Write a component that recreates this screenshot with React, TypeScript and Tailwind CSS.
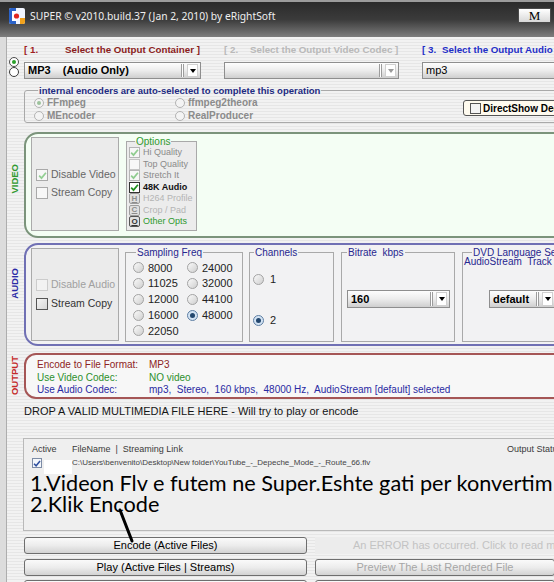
import React from "react";

function CB({ cls, check }: { cls: string; check?: string }) {
  return (
    <div className={`flex shrink-0 items-center justify-center border ${cls}`}>
      {check ? (
        <svg width="9" height="9" viewBox="0 0 10 10">
          <path d="M1.3 5.2 L3.9 7.9 L8.8 2" fill="none" stroke={check} strokeWidth="1.9" />
        </svg>
      ) : null}
    </div>
  );
}

function RD({ cls, dot }: { cls: string; dot?: string }) {
  return (
    <div className={`flex shrink-0 items-center justify-center rounded-full border ${cls}`}>
      {dot ? <div className={`rounded-full ${dot}`} /> : null}
    </div>
  );
}

function Combo({ w, children, arrow, bold }: { w: string; children?: React.ReactNode; arrow?: string; bold?: boolean }) {
  return (
    <div className={`flex h-[17px] shrink-0 items-center border border-[#8e8e8e] bg-gradient-to-b from-[#fdfdfd] via-[#ececec] to-[#cfcfcf] ${w}`}>
      <div className={`flex-1 overflow-hidden whitespace-pre pl-[3px] text-[11px] leading-[15px] text-black ${bold ? "font-bold" : ""}`}>{children}</div>
      {arrow ? (
        <>
          <div className="h-[13px] w-[3px] border-x border-[#9c9c9c] bg-white" />
          <div className="ml-[3px] mr-[2px] flex h-[13px] w-[11px] items-center justify-center border border-[#d0d0d0] bg-white">
            <div className={`h-0 w-0 border-x-[3px] border-t-[4px] border-x-transparent ${arrow}`} />
          </div>
        </>
      ) : null}
    </div>
  );
}

function Btn({ w, children, txt }: { w: string; children?: React.ReactNode; txt: string }) {
  return (
    <div className={`flex h-[17px] shrink-0 items-center justify-center rounded-[3px] border border-[#6e6e6e] bg-gradient-to-b from-[#fafafa] via-[#ececec] to-[#d3d3d3] text-[11px] leading-none ${w} ${txt}`}>
      {children}
    </div>
  );
}

function AppIcon() {
  return (
    <svg width="16" height="16" viewBox="0 0 16 16">
      <rect x="0" y="0" width="16" height="16" rx="2" fill="#f2f6ff" />
      <path d="M2 0 H7 V16 H2 Q0 16 0 14 V2 Q0 0 2 0Z" fill="#2b63c9" />
      <path d="M3 3 H8 V13 H3Z" fill="#ffffff" />
      <circle cx="7.5" cy="8" r="2.6" fill="#e0261f" />
      <path d="M11 10 H16 V14 Q16 16 14 16 H11Z" fill="#f2a21c" />
    </svg>
  );
}

function OptBtn({ l, cls }: { l: string; cls: string }) {
  return (
    <div className={`flex h-[11px] w-[11px] shrink-0 items-center justify-center rounded-[2px] border bg-[#e0e0e0] text-[8px] font-bold leading-none underline ${cls}`}>
      {l}
    </div>
  );
}

export default function App() {
  return (
    <div className="relative h-[582px] w-[554px] overflow-hidden bg-[#ececec] font-['Liberation_Sans',Arial,sans-serif] text-[#222]">
      {/* title bar */}
      <div className="flex h-[37px] items-start border-t-2 border-[#9c9c9c] bg-gradient-to-b from-[#2b2b2b] via-[#3b3b3b] to-[#7e7e7e]">
        <div className="ml-[9px] mt-[6px]">
          <AppIcon />
        </div>
        <div className="ml-[5px] mt-[6px] whitespace-nowrap font-['Noto_Sans',sans-serif] text-[10.3px] leading-[16px] text-[#efefef]">
          SUPER © v2010.build.37 (Jan 2, 2010) by eRightSoft
        </div>
        <div className="ml-auto mr-[3px] mt-[6px] flex h-[15px] w-[33px] items-center justify-center border border-[#4a4a4a] bg-gradient-to-b from-[#ffffff] to-[#d8d8d8] font-['Liberation_Serif',serif] text-[13px] leading-none text-black">
          M
        </div>
      </div>

      <div className="flex h-[545px]">
        <div className="w-[7px] shrink-0 border-r border-[#adadad] bg-[#dcdcdc]" />
        <div className="w-[547px] shrink-0 bg-[repeating-linear-gradient(180deg,#f2f2f2_0px,#f2f2f2_2px,#e6e6e6_2px,#e6e6e6_3px)]">
          {/* step headers + combos */}
          <div className="flex">
            <div className="flex w-[17px] shrink-0 flex-col pl-[2px] pt-[20px]">
              <RD cls="h-[10px] w-[10px] border-[#4d4d4d] bg-white" dot="h-[4px] w-[4px] bg-[#2aa02a]" />
              <RD cls="h-[10px] w-[10px] border-[#3a3a3a] bg-white" />
            </div>
            <div className="flex-1">
              <div className="mt-[7px] flex h-[12px] items-center whitespace-nowrap text-[9.75px] font-bold leading-[12px]">
                <span className="w-[41px] shrink-0 text-[#a01f1f]">[ 1.</span>
                <span className="w-[159px] shrink-0 text-[#8b1c1c]">Select the Output Container ]</span>
                <span className="w-[26px] shrink-0 text-[#b9b9b9]">[ 2.</span>
                <span className="w-[172px] shrink-0 text-[#b9b9b9]">Select the Output Video Codec ]</span>
                <span className="w-[20px] shrink-0 text-[#1f2fc8]">[ 3.</span>
                <span className="shrink-0 text-[#1f2fc8]">Select the Output Audio Codec ]</span>
              </div>
              <div className="mt-[6px] flex">
                <Combo w="w-[177px]" arrow="border-t-black" bold>
                  {"MP3    (Audio Only)"}
                </Combo>
                <div className="ml-[23px]">
                  <Combo w="w-[175px]" arrow="border-t-[#9a9a9a]" />
                </div>
                <div className="ml-[23px]">
                  <Combo w="w-[150px]">mp3</Combo>
                </div>
              </div>
            </div>
          </div>

          {/* encoders */}
          <fieldset className="ml-[17px] mt-[6px] w-[545px] rounded-[3px] border border-[#a9a9a9] pl-[9px]">
            <legend className="ml-[4px] px-[1px] text-[9.5px] font-bold leading-[11px] text-[#1d2b82]">
              internal encoders are auto-selected to complete this operation
            </legend>
            <div className="flex h-[26px]">
              <div className="grid grid-cols-[141px_140px] grid-rows-[13px_13px] text-[10px] font-bold text-[#8b8b8b]">
                <div className="flex items-center gap-[3px]">
                  <RD cls="h-[10px] w-[10px] border-[#b3b3b3] bg-[#f4f4f4]" dot="h-[4px] w-[4px] bg-[#9cc29c]" />
                  <span>FFmpeg</span>
                </div>
                <div className="flex items-center gap-[3px]">
                  <RD cls="h-[10px] w-[10px] border-[#b3b3b3] bg-[#f4f4f4]" />
                  <span>ffmpeg2theora</span>
                </div>
                <div className="flex items-center gap-[3px]">
                  <RD cls="h-[10px] w-[10px] border-[#b3b3b3] bg-[#f4f4f4]" />
                  <span>MEncoder</span>
                </div>
                <div className="flex items-center gap-[3px]">
                  <RD cls="h-[10px] w-[10px] border-[#b3b3b3] bg-[#f4f4f4]" />
                  <span>RealProducer</span>
                </div>
              </div>
              <div className="ml-[148px] mt-[4px] flex h-[16px] w-[110px] shrink-0 items-center rounded-[3px] border border-[#555] bg-[#fffbef] pl-[6px]">
                <CB cls="h-[11px] w-[11px] border-[#555] bg-[#f4f4f4]" />
                <span className="ml-[2px] whitespace-nowrap text-[10px] font-bold text-black">DirectShow Decoding</span>
              </div>
            </div>
          </fieldset>

          {/* VIDEO */}
          <div className="mt-[9px] flex h-[106px]">
            <div className="flex w-[17px] shrink-0 items-start justify-center pr-[2px] pt-[32px]">
              <span className="rotate-180 text-[9.5px] font-bold leading-none text-[#2f9a2f] [writing-mode:vertical-rl]">VIDEO</span>
            </div>
            <div className="flex w-[545px] shrink-0 items-start gap-[7px] rounded-l-[14px] border-2 border-[#7b947b] bg-[#f4fef4] pl-[5px] pt-[3px]">
              <div className="flex h-[94px] w-[88px] shrink-0 flex-col justify-center border border-[#aaaaaa] bg-[#ebebeb] pl-[4px]">
                <div className="flex h-[18px] items-center gap-[3px]">
                  <CB cls="h-[12px] w-[12px] border-[#a9a9a9] bg-[#f7f7f7]" check="#93cf93" />
                  <span className="text-[10.5px] text-[#666]">Disable Video</span>
                </div>
                <div className="flex h-[18px] items-center gap-[3px]">
                  <CB cls="h-[12px] w-[12px] border-[#a9a9a9] bg-[#f7f7f7]" />
                  <span className="text-[10.5px] text-[#666]">Stream Copy</span>
                </div>
              </div>
              <fieldset className="-mt-[1px] h-[95px] w-[71px] shrink-0 border border-[#a9a9a9] bg-[#ececec] pl-[2px]">
                <legend className="ml-[6px] px-[1px] text-[10px] leading-[11px] text-[#2f9a2f]">Options</legend>
                <div className="text-[9px] leading-none">
                  <div className="flex h-[11.5px] items-center gap-[3px]">
                    <CB cls="h-[11px] w-[11px] border-[#b5b5b5] bg-[#f7f7f7]" check="#8fcc8f" />
                    <span className="text-[#8a8a8a]">Hi Quality</span>
                  </div>
                  <div className="flex h-[11.5px] items-center gap-[3px]">
                    <CB cls="h-[11px] w-[11px] border-[#c4c4c4] bg-[#f7f7f7]" />
                    <span className="text-[#8a8a8a]">Top Quality</span>
                  </div>
                  <div className="flex h-[11.5px] items-center gap-[3px]">
                    <CB cls="h-[11px] w-[11px] border-[#b5b5b5] bg-[#f7f7f7]" check="#8fcc8f" />
                    <span className="text-[#8a8a8a]">Stretch It</span>
                  </div>
                  <div className="flex h-[11.5px] items-center gap-[3px]">
                    <CB cls="h-[11px] w-[11px] border-[#333] bg-white" check="#1f8f1f" />
                    <span className="font-bold text-[#111]">48K Audio</span>
                  </div>
                  <div className="flex h-[11.5px] items-center gap-[3px]">
                    <OptBtn l="H" cls="border-[#9d9d9d] text-[#8d8d8d]" />
                    <span className="text-[#b4b4b4]">H264 Profile</span>
                  </div>
                  <div className="flex h-[11.5px] items-center gap-[3px]">
                    <OptBtn l="C" cls="border-[#9d9d9d] text-[#8d8d8d]" />
                    <span className="text-[#b4b4b4]">Crop / Pad</span>
                  </div>
                  <div className="flex h-[11.5px] items-center gap-[3px]">
                    <OptBtn l="O" cls="border-[#555] text-[#333]" />
                    <span className="text-[#2f9a2f]">Other Opts</span>
                  </div>
                </div>
              </fieldset>
            </div>
          </div>

          {/* AUDIO */}
          <div className="mt-[5px] flex h-[103px]">
            <div className="flex w-[17px] shrink-0 items-start justify-center pr-[2px] pt-[25px]">
              <span className="rotate-180 text-[9.5px] font-bold leading-none text-[#2b2ba6] [writing-mode:vertical-rl]">AUDIO</span>
            </div>
            <div className="flex w-[545px] shrink-0 items-start rounded-l-[14px] border-2 border-[#7070b4] bg-[#f2f2f3] pl-[5px]">
              <div className="mt-[3px] flex h-[93px] w-[88px] shrink-0 flex-col justify-center border border-[#aaaaaa] bg-[#ebebeb] pl-[4px]">
                <div className="flex h-[19px] items-center gap-[3px]">
                  <CB cls="h-[12px] w-[12px] border-[#cccccc] bg-[#f2f2f2]" />
                  <span className="text-[10.5px] text-[#a0a0a0]">Disable Audio</span>
                </div>
                <div className="flex h-[19px] items-center gap-[3px]">
                  <CB cls="h-[12px] w-[12px] border-[#555] bg-gradient-to-br from-[#f4f4f4] to-[#d6d6d6]" />
                  <span className="text-[10.5px] text-[#333]">Stream Copy</span>
                </div>
              </div>

              <fieldset className="ml-[6px] mt-[2px] h-[95px] w-[118px] shrink-0 border border-[#a9a9a9] pl-[7px]">
                <legend className="ml-[3px] px-[1px] text-[10px] leading-[11px] text-[#27278f]">Sampling Freq</legend>
                <div className="grid grid-cols-[54px_54px] pt-[2px] text-[11px] text-[#222]">
                  {[
                    ["8000", false],
                    ["24000", false],
                    ["11025", false],
                    ["32000", false],
                    ["12000", false],
                    ["44100", false],
                    ["16000", false],
                    ["48000", true],
                    ["22050", false],
                  ].map(([v, on]) => (
                    <div key={v as string} className="flex h-[15.75px] items-center gap-[4px]">
                      {on ? (
                        <RD cls="h-[11px] w-[11px] border-[#5f7fa3] bg-[#d3e3f3]" dot="h-[5px] w-[5px] bg-[#23476e]" />
                      ) : (
                        <RD cls="h-[11px] w-[11px] border-[#a3a3a3] bg-gradient-to-br from-[#fafafa] to-[#cfcfcf]" />
                      )}
                      <span>{v as string}</span>
                    </div>
                  ))}
                </div>
              </fieldset>

              <fieldset className="ml-[6px] mt-[2px] h-[95px] w-[85px] shrink-0 border border-[#a9a9a9] pl-[3px]">
                <legend className="ml-[1px] px-[1px] text-[10px] leading-[11px] text-[#27278f]">Channels</legend>
                <div className="mt-[15px] flex h-[12px] items-center gap-[6px] text-[11px]">
                  <RD cls="h-[11px] w-[11px] border-[#a3a3a3] bg-gradient-to-br from-[#fafafa] to-[#cfcfcf]" />
                  <span>1</span>
                </div>
                <div className="mt-[29px] flex h-[12px] items-center gap-[6px] text-[11px]">
                  <RD cls="h-[11px] w-[11px] border-[#5f7fa3] bg-[#d3e3f3]" dot="h-[5px] w-[5px] bg-[#23476e]" />
                  <span>2</span>
                </div>
              </fieldset>

              <fieldset className="ml-[7px] mt-[2px] h-[95px] w-[114px] shrink-0 border border-[#a9a9a9] pl-[5px]">
                <legend className="whitespace-pre px-[1px] text-[10px] leading-[11px] text-[#27278f]">{"Bitrate  kbps"}</legend>
                <div className="mt-[32px] h-[18px]">
                  <div className="flex h-[18px] w-[103px] items-center border border-[#8e8e8e] bg-gradient-to-b from-[#fdfdfd] via-[#ececec] to-[#cfcfcf]">
                    <div className="flex-1 pl-[3px] text-[11px] font-bold text-black">160</div>
                    <div className="h-[14px] w-[3px] border-x border-[#9c9c9c] bg-white" />
                    <div className="ml-[3px] mr-[2px] flex h-[14px] w-[11px] items-center justify-center border border-[#d0d0d0] bg-white">
                      <div className="h-0 w-0 border-x-[3px] border-t-[4px] border-x-transparent border-t-black" />
                    </div>
                  </div>
                </div>
              </fieldset>

              <fieldset className="ml-[7px] mt-[2px] h-[95px] w-[130px] shrink-0 border border-[#a9a9a9] pl-[1px]">
                <legend className="ml-[8px] whitespace-nowrap px-[1px] text-[10px] leading-[11px] text-[#27278f]">DVD Language Selection</legend>
                <div className="-mt-[1px] whitespace-pre text-[10px] leading-[10px] text-[#27278f]">{"AudioStream  Track ID"}</div>
                <div className="ml-[25px] mt-[23px] flex h-[18px] w-[90px] items-center border border-[#8e8e8e] bg-gradient-to-b from-[#fdfdfd] via-[#ececec] to-[#cfcfcf]">
                  <div className="w-[46px] pl-[3px] text-[11px] font-bold text-black">default</div>
                  <div className="h-[14px] w-[3px] border-x border-[#9c9c9c] bg-white" />
                  <div className="ml-[3px] flex h-[14px] w-[11px] items-center justify-center border border-[#d0d0d0] bg-white">
                    <div className="h-0 w-0 border-x-[3px] border-t-[4px] border-x-transparent border-t-black" />
                  </div>
                </div>
              </fieldset>
            </div>
          </div>

          {/* OUTPUT */}
          <div className="mt-[7px] flex h-[46px]">
            <div className="flex w-[17px] shrink-0 items-start justify-center pr-[2px] pt-[3px]">
              <span className="rotate-180 text-[9.5px] font-bold leading-none text-[#c42a2a] [writing-mode:vertical-rl]">OUTPUT</span>
            </div>
            <div className="w-[545px] shrink-0 rounded-l-[12px] border-2 border-[#a55656] bg-[#f7f7f7] pl-[11px] pt-[4px] text-[10px] leading-[12.5px]">
              <div className="flex text-[#8e2424]">
                <span className="w-[112px] shrink-0">Encode to File Format:</span>
                <span>MP3</span>
              </div>
              <div className="flex text-[#2c8f2c]">
                <span className="w-[112px] shrink-0">Use Video Codec:</span>
                <span>NO video</span>
              </div>
              <div className="flex text-[#2a2aa2]">
                <span className="w-[112px] shrink-0">Use Audio Codec:</span>
                <span className="whitespace-pre">{"mp3,  Stereo,  160 kbps,  48000 Hz,  AudioStream [default] selected"}</span>
              </div>
            </div>
          </div>

          {/* drop hint */}
          <div className="ml-[17px] mt-[6px] text-[11px] leading-[13px] text-[#151515]">
            DROP A VALID MULTIMEDIA FILE HERE - Will try to play or encode
          </div>

          {/* file list */}
          <div className="relative ml-[16px] mt-[20px] h-[93px] w-[545px] border border-[#b9b9b9] bg-[#efefef]">
            <div className="mt-[4px] flex h-[14px] items-center whitespace-pre pl-[8px] text-[9px] text-[#3a3a3a]">
              <span className="w-[40px] shrink-0">Active</span>
              <span className="w-[435px] shrink-0">{"FileName  |  Streaming Link"}</span>
              <span>Output Status</span>
            </div>
            <div className="flex h-[12px] items-center pl-[8px]">
              <CB cls="h-[10px] w-[10px] border-[#7d8ca6] bg-[#f4f7fb]" check="#2f4f9f" />
              <span className="ml-[30px] whitespace-nowrap text-[8px] text-[#444]">
                {"C:\\Users\\benvenito\\Desktop\\New folder\\YouTube_-_Depeche_Mode_-_Route_66.flv"}
              </span>
            </div>
            <div className="mt-[4px] whitespace-nowrap pl-[6px] font-['Lato',sans-serif] text-[21.7px] leading-[21px] text-black">
              <div>1.Videon Flv e futem ne Super.Eshte gati per konvertim</div>
              <div>2.Klik Encode</div>
            </div>
            <div className="absolute left-[20px] top-[21px] h-[14px] w-[28px] bg-white" />
          </div>

          {/* buttons */}
          <div className="ml-[17px] mt-[6px] flex gap-[8px]">
            <Btn w="w-[283px]" txt="text-black">Encode (Active Files)</Btn>
            <div className="flex h-[17px] w-[240px] shrink-0 items-center whitespace-nowrap bg-[#ececec] pl-[38px] text-[11px] text-[#c3c3c3]">
              An ERROR has occurred. Click to read more
            </div>
          </div>
          <div className="ml-[17px] mt-[5px] flex gap-[8px]">
            <Btn w="w-[283px]" txt="text-black">Play (Active Files | Streams)</Btn>
            <Btn w="w-[240px]" txt="text-[#a6a6a6]">Preview The Last Rendered File</Btn>
          </div>
          <div className="ml-[17px] mt-[4px] flex gap-[8px]">
            <Btn w="w-[283px]" txt="text-black">Stop</Btn>
            <Btn w="w-[240px]" txt="text-black">Copy</Btn>
          </div>
        </div>
      </div>

      {/* annotation arrow */}
      <svg className="pointer-events-none absolute left-0 top-0" width="554" height="582" viewBox="0 0 554 582">
        <path d="M120 510 L132 541" stroke="#000" strokeWidth="3" strokeLinecap="round" />
      </svg>
    </div>
  );
}
